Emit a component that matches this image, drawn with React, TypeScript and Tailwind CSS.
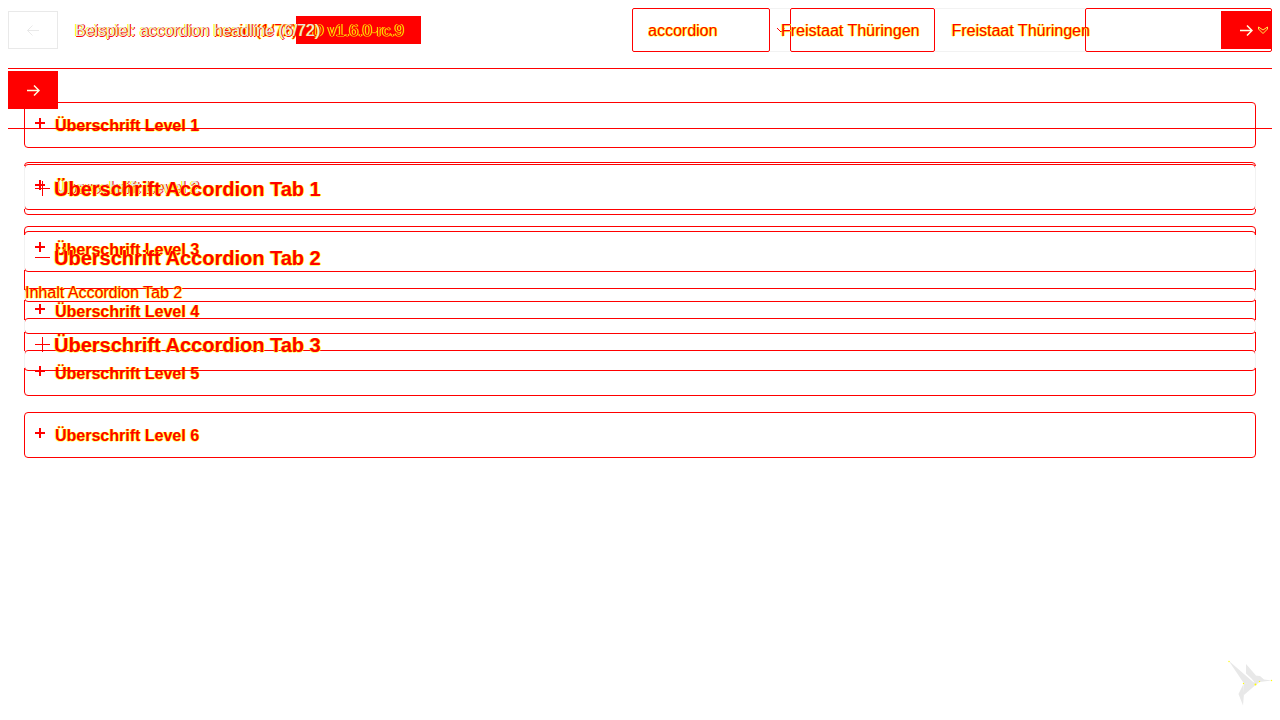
import React from "react";

const halo = "[text-shadow:1px_0_#ff0,-1px_0_#ffff0080,0_1px_#ffff0080] text-[#f00]";
const softHalo = "[text-shadow:1px_0_#f00,-1px_0_#ff0,0_1px_#f00]";

function Arrow({ back = false }: { back?: boolean }) {
  return (
    <svg width="14" height="12" viewBox="0 0 14 12" fill="none" stroke="currentColor" strokeWidth={back ? 1 : 1.5} aria-hidden="true">
      {back ? <path d="M13 6.500H1.500M6.500 1.500l-5 5 5 5" /> : <path d="M1 6.500h12M8 1.500l5 5-5 5" />}
    </svg>
  );
}

function NextButton() {
  return (
    <button aria-label="Weiter" className="flex h-[38px] w-[50px] shrink-0 items-center justify-center bg-[#f00] text-[#ffffe0]">
      <Arrow />
    </button>
  );
}

function Level({ n, mixed = false }: { n: number; mixed?: boolean }) {
  return (
    <section className="h-[46px] rounded border border-[#f00]">
      <h2>
        <button className="flex h-11 w-full items-center gap-[10px] px-[10px] text-left">
          <svg className="-mt-1 shrink-0" width="10" height="10" viewBox="0 0 10 10" aria-hidden="true">
            <path d="M5 0v10M0 5h10" stroke="#f00" strokeWidth="2" />
          </svg>
          <span className={`pt-[2px] text-base leading-6 font-bold ${mixed ? `text-[#e6e6e6] ${softHalo}` : halo}`}>Überschrift Level {n}</span>
        </button>
      </h2>
    </section>
  );
}

function Tab({ n, open = false }: { n: number; open?: boolean }) {
  return (
    <section className={open ? "h-[71px] rounded border border-[#f00]" : "h-[53px] rounded border border-[#f00]"}>
      <h2>
        <button aria-expanded={open} className="flex h-[51px] w-full items-center gap-1 px-[10px] text-left">
          <svg className="shrink-0" width="15" height="15" viewBox="0 0 15 15" aria-hidden="true">
            <path d={open ? "M0 7.5h15" : "M7.5 0v15M0 7.5h15"} stroke="#f00" strokeWidth="1" />
          </svg>
          <span className={`text-xl leading-6 font-bold ${halo}`}>Überschrift Accordion Tab {n}</span>
        </button>
      </h2>
      {open && <p className={`-mt-[2px] text-base leading-6 ${halo}`}>Inhalt Accordion Tab {n}</p>}
    </section>
  );
}

function Hummingbird() {
  return (
    <svg width="46" height="47" viewBox="0 0 46 47" aria-hidden="true">
      <g fill="#e8e8e8">
        <path d="M1.500 1.500L29 25.500l-12-1z" />
        <path d="M19 5l10 11.500-3.500 4-6.500-6z" />
        <path d="M25 20l3-3.500 5 .500 4 3.500 8 1-12.500 1.500-3.500 2.500z" />
        <path d="M17 24.500l15-1.500-15 13z" />
        <path d="M16.500 25l-5 10 4.500 11.500 1-12z" />
      </g>
      <g fill="#ff0">
        <circle cx="2" cy="2.500" r="0.700" />
        <circle cx="16.500" cy="24.500" r="0.700" />
        <circle cx="28.500" cy="25.500" r="1" />
        <circle cx="32.500" cy="22.500" r="0.700" />
        <circle cx="44.500" cy="21.500" r="0.700" />
      </g>
    </svg>
  );
}

export default function App() {
  return (
    <main className="relative min-h-screen overflow-hidden bg-white px-2 pt-2 font-['Liberation_Sans',Arial,sans-serif] text-base">
      <header className="flex h-[61px] items-start border-b border-[#f00]">
        <button aria-label="Zurück" className="mt-[3px] flex h-[38px] w-[50px] shrink-0 items-center justify-center border border-[#e9e9e9] text-[#e9e9e9]">
          <Arrow back />
        </button>
        <h1 className={`relative z-10 mt-[11px] ml-[17px] leading-6 whitespace-nowrap text-[#e6e6e6] ${softHalo}`}>
          Beispiel: accordion headline (6/72)
        </h1>
        <div className="ml-auto flex w-[640px]">
          <label className="flex h-11 w-[138px] shrink-0 items-center rounded-[2px] border border-[#f00] px-[15px]">
            <input aria-label="Komponente" defaultValue="accordion" className={`w-full bg-transparent pt-[2px] outline-none ${halo}`} />
          </label>
          <div className="h-11 w-5 border-y border-[#f2f2f2]" />
          <div className="h-11 w-[145px] rounded-[2px] border border-[#f00]" />
          <div className="h-11 w-[150px] border-y border-[#f2f2f2]" />
          <div className="flex h-11 min-w-0 flex-1 justify-end rounded-[2px] border border-[#f00] pt-[2px]">
            <NextButton />
          </div>
        </div>
      </header>

      <div className="flex flex-col gap-4 px-4 pt-[33px]">
        {[1, 2, 3, 4, 5, 6].map((n) => (
          <Level key={n} n={n} mixed={n === 2} />
        ))}
      </div>

      <div className="pointer-events-none absolute inset-x-2 top-2">
        <div className="flex h-[60px] items-start">
          <h1 className="mt-[11px] ml-[67px] w-[221px] shrink-0 leading-6 whitespace-nowrap">
            <span className="text-transparent">Beispiel: accordion </span>
            <span className={halo}>basic (1/72)</span>
          </h1>
          <span className="mt-2 h-7 w-[125px] shrink-0 bg-[#f00] px-4 pt-[3px] leading-6 whitespace-nowrap text-[#f00] [text-shadow:1px_0_#ff0,-1px_0_#ff0,0_1px_#ffff0080]">D v1.6.0-rc.9</span>
          <div className="ml-auto flex w-[640px] pt-[11px] leading-6 whitespace-nowrap">
            <svg className="mt-[8px] ml-[145px]" width="9" height="7" viewBox="0 0 9 7" fill="none" stroke="#f00" aria-hidden="true">
              <path d="M0 1l4 4 4-4" />
            </svg>
            <span className={`-ml-[5px] ${halo}`}>Freistaat Thüringen</span>
            <span className={`ml-8 ${halo}`}>Freistaat Thüringen</span>
            <svg className="mt-[7px] mr-1 ml-auto" width="10" height="9" viewBox="0 0 10 9" fill="none" stroke="#fff04d" aria-hidden="true">
              <path d="M0.500 1l4.500 3 4.500-3v2L5 7.500 0.500 3z" />
            </svg>
          </div>
        </div>
        <div className="h-[61px] border-b border-[#f00] pt-[3px]">
          <NextButton />
        </div>
        <div className="flex flex-col gap-4 px-4 pt-[33px]">
          <Tab n={1} />
          <Tab n={2} open />
          <Tab n={3} />
        </div>
      </div>

      <div className="pointer-events-none absolute inset-x-6 top-[166px]">
        <div className="h-[43px] border-x border-[#f2f2f2]" />
        <div className="mt-[26px] h-[35px] border-x border-[#f2f2f2]" />
        <div className="mt-[20px] h-[10px] border-x border-[#f2f2f2]" />
        <div className="mt-[20px] h-[12px] border-x border-[#f2f2f2]" />
        <div className="mt-[19px] h-[17px] border-x border-[#f2f2f2]" />
      </div>

      <div className="absolute right-[7px] bottom-[14px]">
        <Hummingbird />
      </div>
    </main>
  );
}
